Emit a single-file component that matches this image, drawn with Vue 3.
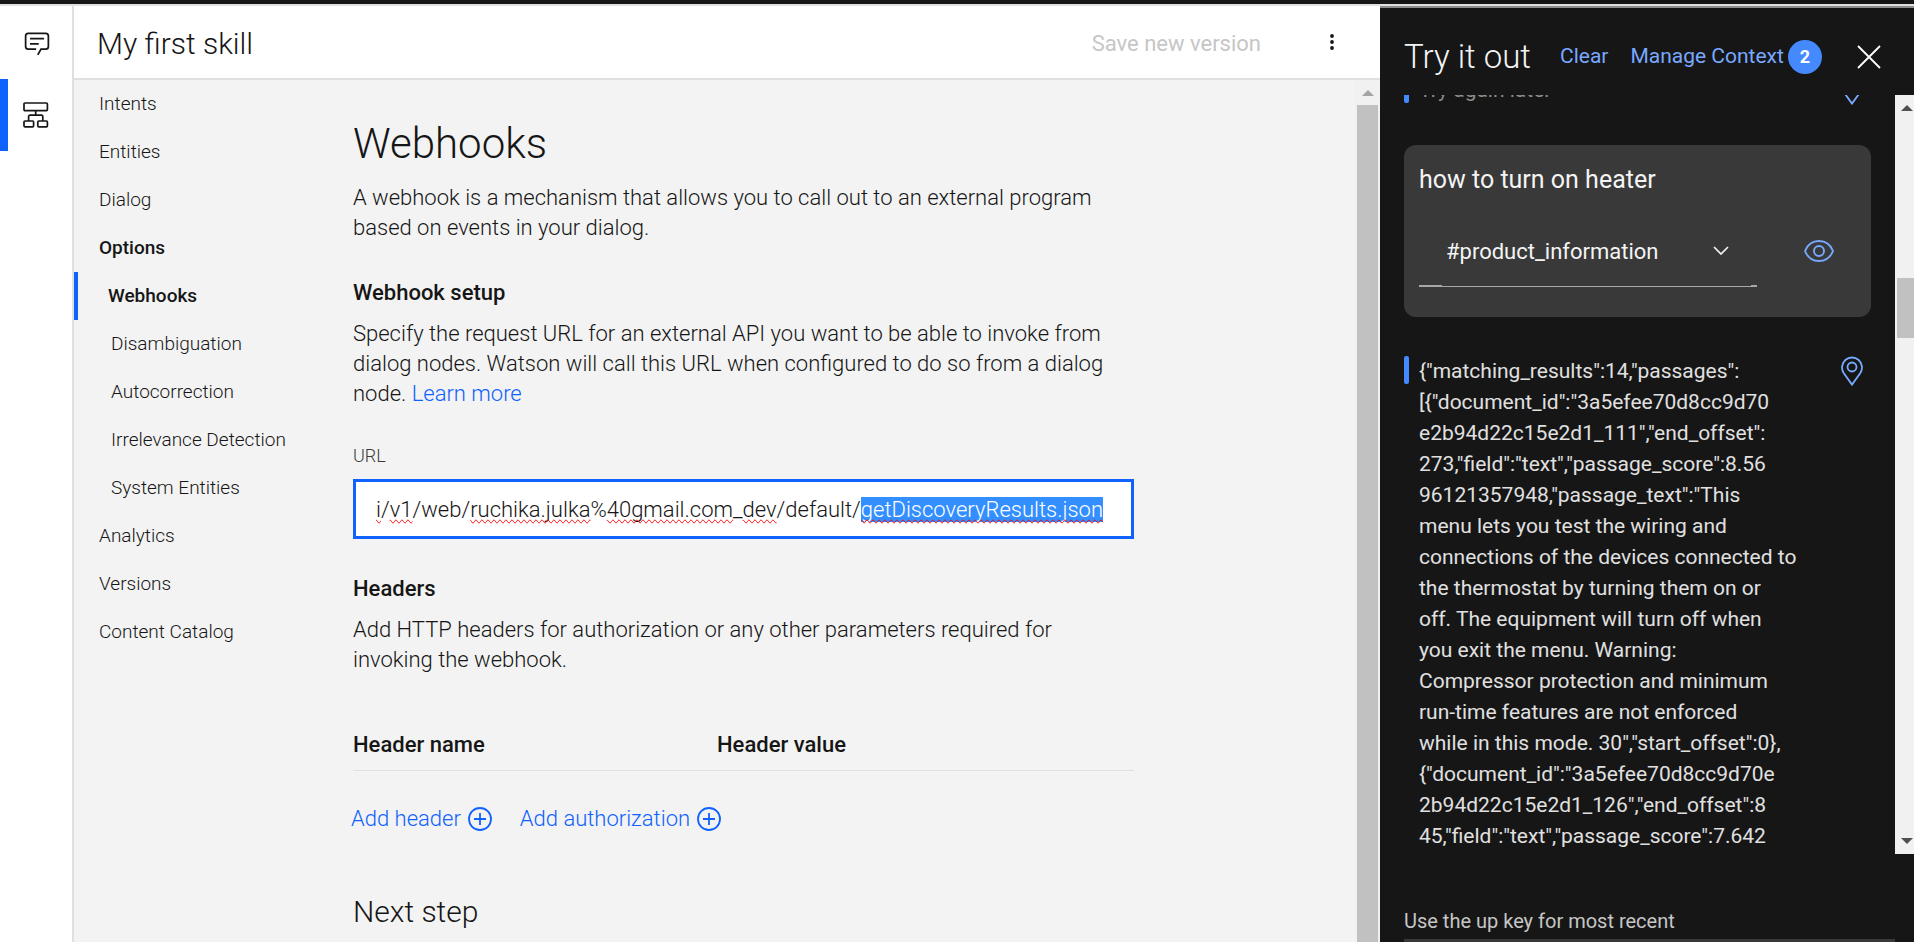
<script setup>
import { ref, onMounted } from 'vue'

const navItems = [
  { label: 'Intents' },
  { label: 'Entities' },
  { label: 'Dialog' },
  { label: 'Options', strong: true },
  { label: 'Webhooks', active: true },
  { label: 'Disambiguation', sub: true },
  { label: 'Autocorrection', sub: true },
  { label: 'Irrelevance Detection', sub: true },
  { label: 'System Entities', sub: true },
  { label: 'Analytics' },
  { label: 'Versions' },
  { label: 'Content Catalog' }
]

const urlParts = [
  { text: 'i', flagged: true },
  { text: '/' },
  { text: 'v1', flagged: true },
  { text: '/web/' },
  { text: 'ruchika.julka', flagged: true },
  { text: '%' },
  { text: '40gmail.com', flagged: true },
  { text: '_' },
  { text: 'dev', flagged: true },
  { text: '/default/' },
  { text: 'getDiscoveryResults.json', flagged: true }
]
const url = ref(urlParts.map((part) => part.text).join(''))
const urlInput = ref(null)
const draft = ref('')
const intent = ref('#product_information')

const replyLines = [
  '{"matching_results":14,"passages":',
  '[{"document_id":"3a5efee70d8cc9d70',
  'e2b94d22c15e2d1_111","end_offset":',
  '273,"field":"text","passage_score":8.56',
  '96121357948,"passage_text":"This',
  'menu lets you test the wiring and',
  'connections of the devices connected to',
  'the thermostat by turning them on or',
  'off. The equipment will turn off when',
  'you exit the menu. Warning:',
  'Compressor protection and minimum',
  'run-time features are not enforced',
  'while in this mode. 30","start_offset":0},',
  '{"document_id":"3a5efee70d8cc9d70e',
  '2b94d22c15e2d1_126","end_offset":8',
  '45,"field":"text","passage_score":7.642'
]

onMounted(() => {
  const el = urlInput.value
  el.focus({ preventScroll: true })
  el.setSelectionRange(url.value.lastIndexOf('/') + 1, url.value.length)
})
</script>

<template>
  <div class="app">
    <div class="topbar"></div>
    <div class="shell">
      <nav class="rail" aria-label="Workspace">
        <a href="#" class="rail-item" aria-label="Assistants">
          <svg class="icon-chat" viewBox="0 0 32 32" aria-hidden="true">
            <path d="M17.74 30 16 29l4-7h6a2 2 0 0 0 2-2V8a2 2 0 0 0-2-2H6a2 2 0 0 0-2 2v12a2 2 0 0 0 2 2h9v2H6a4 4 0 0 1-4-4V8a4 4 0 0 1 4-4h20a4 4 0 0 1 4 4v12a4 4 0 0 1-4 4h-4.84Z" />
            <path d="M8 10h16v2H8zM8 16h10v2H8z" />
          </svg>
        </a>
        <a href="#" class="rail-item current" aria-label="Skills">
          <svg class="icon-flow" viewBox="0 0 26 26" aria-hidden="true">
            <rect x="1" y="1" width="23.4" height="7.6" rx="1" />
            <path d="M12.7 8.6v4.6M5.6 19v-4.4a1.4 1.4 0 0 1 1.4-1.4h11.4a1.4 1.4 0 0 1 1.4 1.4V19" />
            <rect x="1" y="19" width="9.6" height="5.8" rx="1" />
            <rect x="14.8" y="19" width="9.6" height="5.8" rx="1" />
          </svg>
        </a>
      </nav>

      <div class="workspace">
        <header class="skill-header">
          <h1 class="skill-name">My first skill</h1>
          <button type="button" class="save" disabled>Save new version</button>
          <button type="button" class="more" aria-label="More options">
            <svg viewBox="0 0 24 24" aria-hidden="true">
              <circle cx="12" cy="6" r="1.9" />
              <circle cx="12" cy="12" r="1.9" />
              <circle cx="12" cy="18" r="1.9" />
            </svg>
          </button>
        </header>

        <div class="body">
          <nav class="side-nav" aria-label="Skill">
            <a
              v-for="item in navItems"
              :key="item.label"
              href="#"
              :class="{ strong: item.strong, active: item.active, sub: item.sub }"
            >{{ item.label }}</a>
          </nav>

          <main class="content">
            <h2 class="page-title">Webhooks</h2>
            <p>A webhook is a mechanism that allows you to call out to an external program<br />based on events in your dialog.</p>

            <h3>Webhook setup</h3>
            <p>Specify the request URL for an external API you want to be able to invoke from<br />dialog nodes. Watson will call this URL when configured to do so from a dialog<br />node. <a href="#">Learn more</a></p>

            <label class="field-label" for="webhook-url">URL</label>
            <div class="url-field">
              <input id="webhook-url" ref="urlInput" v-model="url" type="text" spellcheck="false" />
              <div class="spelling" aria-hidden="true"><span v-for="(part, i) in urlParts" :key="i" :class="{ flagged: part.flagged }">{{ part.text }}</span></div>
            </div>

            <h3>Headers</h3>
            <p>Add HTTP headers for authorization or any other parameters required for<br />invoking the webhook.</p>

            <table>
              <thead>
                <tr>
                  <th scope="col" class="name-col">Header name</th>
                  <th scope="col">Header value</th>
                </tr>
              </thead>
            </table>

            <div class="actions">
              <button v-for="label in ['Add header', 'Add authorization']" :key="label" type="button">
                {{ label }}
                <svg viewBox="0 0 24 24" aria-hidden="true">
                  <circle cx="12" cy="12" r="11" />
                  <path d="M12 6v12M6 12h12" />
                </svg>
              </button>
            </div>

            <h2 class="next-step">Next step</h2>
          </main>

          <div class="scrollbar page-scroll" aria-hidden="true">
            <svg viewBox="0 0 12 6"><path d="M0 6 6 0l6 6z" /></svg>
            <span class="thumb"></span>
          </div>
        </div>
      </div>

      <aside class="tryout" aria-label="Try it out">
        <header class="tryout-header">
          <h2>Try it out</h2>
          <button type="button" class="link">Clear</button>
          <button type="button" class="link context">Manage Context<span class="badge">2</span></button>
          <button type="button" class="close" aria-label="Close">
            <svg viewBox="0 0 24 24" aria-hidden="true"><path d="m1 1 22 22M23 1 1 23" /></svg>
          </button>
        </header>

        <div class="chat">
          <div class="messages">
            <div class="reply faded">
              <p>Try again later</p>
              <button type="button" aria-label="Locate node">
                <svg viewBox="0 0 22 30" aria-hidden="true">
                  <path d="M11 28.6 2.8 17.2A10 10 0 1 1 19.2 17.2Z" />
                  <circle cx="11" cy="11" r="4.5" />
                </svg>
              </button>
            </div>

            <section class="prompt">
              <p>how to turn on heater</p>
              <div class="intent-row">
                <div class="intent">
                  <select v-model="intent" aria-label="Intent">
                    <option>#product_information</option>
                  </select>
                  <svg viewBox="0 0 16 9" aria-hidden="true"><path d="m1 1 7 7 7-7" /></svg>
                </div>
                <button type="button" aria-label="Show details">
                  <svg viewBox="0 0 30 22" aria-hidden="true">
                    <path d="M1 11C3.6 4.6 8.8 1 15 1s11.400 3.6 14 10c-2.6 6.4-7.8 10-14 10S3.600 17.4 1 11Z" />
                    <circle cx="15" cy="11" r="5" />
                  </svg>
                </button>
              </div>
            </section>

            <div class="reply">
              <p><span v-for="line in replyLines" :key="line">{{ line }}</span></p>
              <button type="button" aria-label="Locate node">
                <svg viewBox="0 0 22 30" aria-hidden="true">
                  <path d="M11 28.6 2.8 17.2A10 10 0 1 1 19.2 17.2Z" />
                  <circle cx="11" cy="11" r="4.5" />
                </svg>
              </button>
            </div>
          </div>

          <div class="scrollbar chat-scroll" aria-hidden="true">
            <svg viewBox="0 0 12 6"><path d="M0 6 6 0l6 6z" /></svg>
            <span class="thumb"></span>
            <svg viewBox="0 0 12 6"><path d="M0 0 6 6l6-6z" /></svg>
          </div>
        </div>

        <footer class="compose">
          <label for="message">Use the up key for most recent</label>
          <input id="message" v-model="draft" type="text" />
        </footer>
      </aside>
    </div>
  </div>
</template>

<style>
body {
  margin: 0;
  overflow: hidden;
}
</style>

<style scoped>
.app {
  height: 100vh;
  display: flex;
  flex-direction: column;
  background: #fff;
  color: #161616;
  font-family: Roboto, "Liberation Sans", sans-serif;
  font-size: 22px;
  font-weight: 300;
  line-height: 30px;
}
.app *,
.app *::before,
.app *::after {
  box-sizing: border-box;
}
h1, h2, h3, p {
  margin: 0;
  font-weight: 300;
}
button, input, select {
  margin: 0;
  padding: 0;
  border: 0;
  border-radius: 0;
  background: none;
  color: inherit;
  font: inherit;
}
svg {
  display: block;
  flex: none;
}
a {
  color: #0f62fe;
  text-decoration: none;
}

.topbar {
  flex: none;
  height: 6px;
  background: #161616;
  border-bottom: 2px solid #e0e0e0;
}
.shell {
  flex: 1;
  min-height: 0;
  display: flex;
}

.rail {
  flex: none;
  width: 74px;
  border-right: 2px solid #e0e0e0;
}
.rail-item {
  display: flex;
  align-items: center;
  justify-content: center;
  height: 73px;
  padding-left: 2px;
}
.rail-item.current {
  height: 72px;
  padding: 0 8px 0 0;
  border-left: 8px solid #0f62fe;
}
.icon-chat {
  width: 28px;
  height: 28px;
  fill: #161616;
}
.icon-flow {
  width: 26px;
  height: 26px;
  fill: none;
  stroke: #161616;
  stroke-width: 1.7;
}

.workspace {
  flex: 1;
  min-width: 0;
  display: flex;
  flex-direction: column;
}
.skill-header {
  flex: none;
  height: 74px;
  display: flex;
  align-items: center;
  padding: 0 36px 0 23px;
  border-bottom: 2px solid #e0e0e0;
}
.skill-name {
  flex: 1;
  padding-top: 3px;
  font-size: 30px;
  line-height: 36px;
}
.save {
  margin-right: 59px;
  padding-top: 3px;
  color: #c6c6c6;
  font-weight: 400;
}
.more svg {
  width: 24px;
  height: 24px;
  fill: #161616;
}

.body {
  flex: 1;
  min-height: 0;
  display: flex;
  overflow: hidden;
  background: #f3f3f3;
}
.side-nav {
  flex: none;
  width: 279px;
}
.side-nav a {
  display: block;
  padding-left: 25px;
  color: #161616;
  font-size: 19px;
  line-height: 48px;
}
.side-nav .strong {
  font-weight: 500;
}
.side-nav .active {
  padding-left: 30px;
  border-left: 4px solid #0f62fe;
  font-weight: 500;
}
.side-nav .sub {
  padding-left: 37px;
}

.content {
  flex: 1;
  min-width: 0;
  max-width: 781px;
  padding-top: 40px;
  white-space: nowrap;
}
.page-title {
  margin-bottom: 15px;
  font-size: 42px;
  line-height: 48px;
}
h3 {
  margin: 35px 0 11px;
  font-size: 22px;
  font-weight: 500;
}
.field-label {
  display: block;
  margin: 35px 0 11px;
  color: #393939;
  font-size: 18px;
  line-height: 24px;
}
.url-field {
  position: relative;
}
.url-field input {
  display: block;
  width: 100%;
  height: 60px;
  padding: 0 20px;
  border: 3px solid #0f62fe;
  outline: 0;
  background: #fff;
}
.url-field input::selection {
  background: #338fff;
  color: #fff;
}
.spelling {
  position: absolute;
  inset: 0;
  padding: 17px 23px 13px;
  overflow: hidden;
  color: transparent;
  pointer-events: none;
}
.flagged {
  text-decoration: spelling-error;
}
table {
  width: 100%;
  margin-top: 55px;
  border-collapse: collapse;
}
th {
  padding: 0 0 10px;
  border-bottom: 1px solid #e0e0e0;
  font-weight: 500;
  text-align: left;
}
.name-col {
  width: 364px;
}
.actions {
  display: flex;
  gap: 28px;
  margin: 33px 0 60px -2px;
}
.actions button {
  display: flex;
  align-items: center;
  gap: 7px;
  color: #0f62fe;
}
.actions svg {
  width: 24px;
  height: 24px;
  fill: none;
  stroke: #0f62fe;
  stroke-width: 1.8;
}
.next-step {
  font-size: 30px;
  line-height: 36px;
}

.scrollbar {
  flex: none;
  display: flex;
  flex-direction: column;
  align-items: center;
  background: #f1f1f1;
}
.scrollbar svg {
  width: 12px;
  height: 6px;
}
.page-scroll {
  width: 25px;
  margin-left: auto;
  padding-top: 10px;
  fill: #a3a3a3;
}
.page-scroll .thumb {
  flex: 1;
  width: 21px;
  margin-top: 9px;
  background: #c1c1c1;
}

.tryout {
  flex: none;
  width: 534px;
  display: flex;
  flex-direction: column;
  border-top: 2px solid #8d8d8d;
  background: #161616;
  color: #f4f4f4;
  font-size: 21px;
  font-weight: 400;
  line-height: 31px;
}
.tryout-header {
  flex: none;
  height: 87px;
  display: flex;
  align-items: center;
  padding: 10px 33px 0 24px;
}
.tryout-header h2 {
  margin-right: 29px;
  font-size: 33px;
  line-height: 40px;
}
.link {
  margin-right: 22px;
  color: #78a9ff;
}
.context {
  display: flex;
  align-items: center;
  margin-right: 0;
}
.badge {
  min-width: 34px;
  height: 34px;
  margin-left: 4px;
  border-radius: 17px;
  background: #4589ff;
  color: #fff;
  font-size: 18px;
  font-weight: 700;
  line-height: 34px;
}
.close {
  margin-left: auto;
}
.close svg {
  width: 24px;
  height: 24px;
  fill: none;
  stroke: #fff;
  stroke-width: 1.8;
}

.chat {
  flex: 1;
  min-height: 0;
  display: flex;
  overflow: hidden;
}
.messages {
  flex: 1;
  min-width: 0;
  display: flex;
  flex-direction: column;
  gap: 39px;
  margin-top: -20px;
  padding: 0 24px;
}
.reply {
  display: flex;
  justify-content: space-between;
  align-items: flex-start;
  padding-right: 8px;
  color: #e0e0e0;
  white-space: nowrap;
}
.reply::before {
  content: "";
  flex: none;
  width: 5px;
  height: 28px;
  margin-right: 10px;
  border-radius: 2px;
  background: #4589ff;
}
.reply p {
  flex: 1;
  font-weight: 400;
}
.reply span {
  display: block;
}
.reply svg {
  width: 22px;
  height: 30px;
  fill: none;
  stroke: #78a9ff;
  stroke-width: 1.8;
}
.faded {
  color: #8d8d8d;
}
.prompt {
  padding: 19px 37px 30px 15px;
  border-radius: 12px;
  background: #393939;
}
.prompt p {
  margin-bottom: 19px;
  font-size: 25px;
  font-weight: 400;
  line-height: 32px;
}
.intent-row {
  display: flex;
  align-items: center;
  justify-content: space-between;
}
.intent {
  position: relative;
  width: 338px;
}
.intent select {
  display: block;
  width: 100%;
  height: 72px;
  padding: 0 60px 0 27px;
  appearance: none;
  font-size: 22px;
  background:
    linear-gradient(#a8a8a8, #a8a8a8) left bottom / 23px 2px no-repeat,
    linear-gradient(#a8a8a8, #a8a8a8) right bottom / 6px 2px no-repeat,
    linear-gradient(#a8a8a8, #a8a8a8) left bottom / 100% 1px no-repeat;
}
.intent svg {
  position: absolute;
  top: 31px;
  right: 28px;
  width: 16px;
  height: 9px;
  fill: none;
  stroke: #f4f4f4;
  stroke-width: 1.7;
  pointer-events: none;
}
.intent-row button svg {
  width: 30px;
  height: 22px;
  fill: none;
  stroke: #78a9ff;
  stroke-width: 1.9;
}

.chat-scroll {
  align-items: flex-end;
  width: 19px;
  padding: 10px 0;
  fill: #505050;
}
.chat-scroll svg {
  margin-right: 1px;
}
.chat-scroll .thumb {
  width: 17px;
  height: 60px;
  margin: 167px 0 auto;
  background: #c1c1c1;
}

.compose {
  flex: none;
  height: 88px;
  padding: 53px 19px 0 24px;
  overflow: hidden;
}
.compose label {
  display: block;
  margin-bottom: 4px;
  color: #c6c6c6;
  font-size: 20px;
  line-height: 28px;
}
.compose input {
  display: block;
  width: 100%;
  height: 48px;
  background: #393939;
}
</style>
